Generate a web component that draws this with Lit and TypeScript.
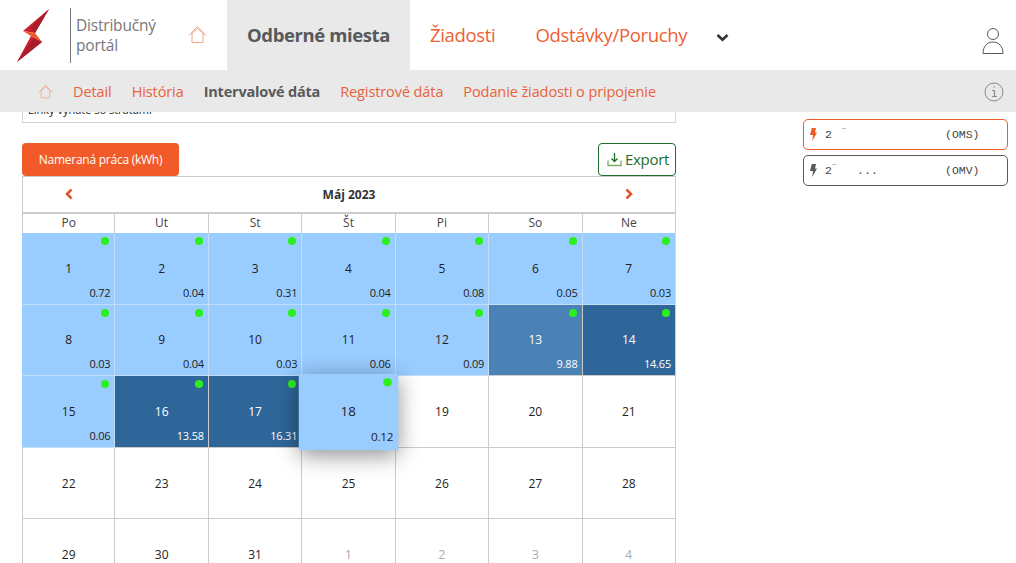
import { LitElement, html, css, svg } from 'lit';
import { customElement } from 'lit/decorators.js';
import { classMap } from 'lit/directives/class-map.js';

type Day = { n: number; v?: string; tone?: string; hover?: boolean; muted?: boolean };

const days: Day[] = [
  { n: 1, v: '0.72', tone: 'low' }, { n: 2, v: '0.04', tone: 'low' }, { n: 3, v: '0.31', tone: 'low' },
  { n: 4, v: '0.04', tone: 'low' }, { n: 5, v: '0.08', tone: 'low' }, { n: 6, v: '0.05', tone: 'low' },
  { n: 7, v: '0.03', tone: 'low' }, { n: 8, v: '0.03', tone: 'low' }, { n: 9, v: '0.04', tone: 'low' },
  { n: 10, v: '0.03', tone: 'low' }, { n: 11, v: '0.06', tone: 'low' }, { n: 12, v: '0.09', tone: 'low' },
  { n: 13, v: '9.88', tone: 'mid' }, { n: 14, v: '14.65', tone: 'high' }, { n: 15, v: '0.06', tone: 'low' },
  { n: 16, v: '13.58', tone: 'high' }, { n: 17, v: '16.31', tone: 'high' },
  { n: 18, v: '0.12', tone: 'low', hover: true },
  { n: 19 }, { n: 20 }, { n: 21 }, { n: 22 }, { n: 23 }, { n: 24 }, { n: 25 }, { n: 26 }, { n: 27 }, { n: 28 },
  { n: 29 }, { n: 30 }, { n: 31 },
  { n: 1, muted: true }, { n: 2, muted: true }, { n: 3, muted: true }, { n: 4, muted: true },
];

const homeIcon = svg`<path d="M1 10.500 9.500 1.500 18 10.500M3 9 9.500 3.500 16 9M4 8.500v9h11v-9" fill="none" stroke="currentColor" stroke-width="1"/>`;
const boltPath = svg`<path d="M1.800 0H6L5 4.500H7L2.300 13 3 7H0z" fill="currentColor"/>`;

@customElement('app-root')
export class AppRoot extends LitElement {
  static styles = css`
    :host {
      display: block;
      height: 563px;
      overflow: hidden;
      background: #fff;
      font-family: 'Open Sans', sans-serif;
      color: #222;
    }

    .top {
      display: flex;
      height: 70px;
    }

    .logo {
      display: block;
      margin: 8px 0 0 16px;
      width: 36px;
      height: 56px;
    }

    .brand {
      margin: 8px 0 0 18px;
      height: 55px;
      width: 96px;
      box-sizing: border-box;
      border-left: 1px solid #77787b;
      padding: 7px 0 0 5px;
      font-size: 15.5px;
      line-height: 20px;
      letter-spacing: -0.2px;
      color: #77787b;
    }

    .home {
      color: #f2a488;
      display: block;
      margin: 25px 20px 0 22px;
      width: 19px;
      height: 19px;
    }

    .tab {
      font-size: 18.5px;
      line-height: 69px;
      color: #ee5f33;
      letter-spacing: -0.33px;
      white-space: nowrap;
    }

    .tab.active {
      width: 183px;
      box-sizing: border-box;
      padding-left: 20px;
      margin-right: 20px;
      background: #e9e9e9;
      color: #58595b;
      font-weight: 700;
      letter-spacing: -0.4px;
    }

    .tab.second {
      margin-left: 40px;
    }

    .chevron {
      display: block;
      margin: 33px 0 0 29px;
      width: 13px;
      height: 9px;
    }

    .user {
      display: block;
      margin: 27px 12px 0 auto;
      width: 22px;
      height: 28px;
      color: #58595b;
    }

    .sub {
      display: flex;
      align-items: center;
      height: 42px;
      padding-left: 38px;
      background: #e9e9e9;
      font-size: 14.5px;
      letter-spacing: -0.1px;
      color: #e8623a;
    }

    .sub .home {
      margin: 1px 20px 0 0;
      width: 15px;
      height: 15px;
      color: #eea58c;
    }

    .sub a {
      margin-right: 20px;
      white-space: nowrap;
    }

    .sub a.current {
      font-weight: 700;
      color: #58595b;
      letter-spacing: -0.2px;
    }

    .info {
      display: block;
      margin: 2px 12px 0 auto;
      width: 20px;
      height: 20px;
      color: #8a8a8a;
    }

    .body {
      display: flex;
    }

    .main {
      width: 654px;
      margin-left: 22px;
    }

    .clipped {
      height: 11px;
      box-sizing: border-box;
      overflow: hidden;
      border: 1px solid #d4d4d4;
      border-top: 0;
      padding-left: 5px;
      font-size: 11px;
      line-height: 14px;
    }

    .clipped span {
      display: block;
      margin-top: -9px;
    }

    .actions {
      display: flex;
      justify-content: space-between;
      margin-top: 20px;
      height: 33px;
    }

    .measure {
      width: 157px;
      height: 33px;
      background: #f15a29;
      color: #fff;
      border-radius: 4px;
      font-size: 12px;
      line-height: 33px;
      text-align: center;
      letter-spacing: -0.25px;
    }

    .export {
      display: flex;
      align-items: center;
      gap: 3px;
      width: 78px;
      height: 33px;
      box-sizing: border-box;
      padding: 0 0 1px 8px;
      border: 1px solid #1c6e2a;
      border-radius: 4px;
      color: #1c6e2a;
      font-size: 15px;
      letter-spacing: -0.3px;
    }

    .export svg {
      display: block;
      width: 15px;
      height: 15px;
    }

    .cal {
      border-top: 1px solid #ccc;
    }

    .month {
      display: flex;
      align-items: center;
      justify-content: space-between;
      height: 35px;
      padding: 0 42px;
      border: 1px solid #ccc;
      border-width: 0 1px 2px;
      font-size: 12px;
      font-weight: 700;
      color: #333;
    }

    .month svg {
      display: block;
      width: 8px;
      height: 12px;
      margin-top: -2px;
    }

    .grid {
      display: grid;
      grid-template-columns: repeat(7, 1fr);
    }

    .head {
      height: 19px;
      line-height: 18px;
      text-align: center;
      font-size: 12px;
      color: #444;
      border-right: 1px solid #ccc;
    }

    .day {
      position: relative;
      height: 71.6px;
      box-sizing: border-box;
      display: flex;
      align-items: center;
      justify-content: center;
      border-right: 1px solid #ccc;
      border-bottom: 1px solid #ccc;
      font-size: 12px;
      color: #222;
    }

    .head:nth-child(7n + 1),
    .day:nth-child(7n + 1) {
      border-left: 1px solid #ccc;
    }

    .day.low {
      background: #99ccff;
      border-right-color: #c3ddf5;
      border-bottom-color: #c3ddf5;
    }

    .day.mid {
      background: #4a82b5;
      color: #fff;
    }

    .day.high {
      background: #2f6699;
      color: #fff;
    }

    .day.low:nth-child(7n + 1) {
      border-left-color: transparent;
    }

    .day.muted {
      color: #aaa;
    }

    .day.hover {
      z-index: 2;
      border-color: transparent;
      font-size: 12.5px;
      transform: scale(1.07, 1.06);
      box-shadow: 0 5px 20px rgba(0, 0, 0, 0.45);
    }

    .dot {
      position: absolute;
      top: 4px;
      right: 5px;
      width: 8px;
      height: 8px;
      border-radius: 50%;
      background: #2bf01e;
    }

    .val {
      position: absolute;
      right: 4px;
      bottom: 4px;
      font-size: 11px;
      line-height: 14px;
      letter-spacing: -0.2px;
    }

    .hover .val {
      bottom: 5px;
    }

    .side {
      display: flex;
      flex-direction: column;
      gap: 5px;
      width: 205px;
      margin: 7px 0 0 127px;
    }

    .meter {
      display: flex;
      align-items: center;
      height: 31px;
      box-sizing: border-box;
      padding-left: 6px;
      border: 1px solid #58595b;
      border-radius: 5px;
      font-family: 'Liberation Mono', monospace;
      font-size: 11.5px;
      color: #444;
    }

    .meter.on {
      border-color: #f15a29;
    }

    .meter svg {
      display: block;
      width: 7px;
      height: 13px;
      margin-right: 8px;
      color: #58595b;
    }

    .meter.on svg {
      color: #f15a29;
    }

    .meter .id {
      width: 120px;
      white-space: nowrap;
    }

    .tick {
      display: inline-block;
      font-size: 7px;
      vertical-align: 4px;
    }

    .tick.far {
      margin-left: 10px;
    }

    .dots {
      margin-left: 21px;
    }
  `;

  render() {
    return html`
      <div class="top">
        <svg class="logo" viewBox="0 0 36 56">
          <polygon points="33,1 7,23 19,25" fill="#c8202f" />
          <polygon points="33,1 14,20 19,25" fill="#a81d2a" />
          <polygon points="7,23 19,25 26,34 15,28" fill="#f15a29" />
          <polygon points="26,34 15,28 1,54" fill="#c8202f" />
          <polygon points="26,34 18,30 1,54" fill="#a81d2a" />
        </svg>
        <div class="brand">Distribučný<br />portál</div>
        <svg class="home" viewBox="0 0 19 19">${homeIcon}</svg>
        <div class="tab active">Odberné miesta</div>
        <div class="tab">Žiadosti</div>
        <div class="tab second">Odstávky/Poruchy</div>
        <svg class="chevron" viewBox="0 0 13 9">
          <path d="M1.500 2 6.500 6.800 11.500 2" fill="none" stroke="#333" stroke-width="2.600" />
        </svg>
        <svg class="user" viewBox="0 0 22 28" fill="none" stroke="currentColor" stroke-width="1">
          <circle cx="11" cy="7" r="5.500" />
          <path d="M1 26.500h20c0-7-4-11.500-10-11.500S1 19.500 1 26.500z" />
        </svg>
      </div>
      <div class="sub">
        <svg class="home" viewBox="0 0 19 19">${homeIcon}</svg>
        <a>Detail</a>
        <a>História</a>
        <a class="current">Intervalové dáta</a>
        <a>Registrové dáta</a>
        <a>Podanie žiadosti o pripojenie</a>
        <svg class="info" viewBox="0 0 20 20" fill="none" stroke="currentColor">
          <circle cx="10" cy="10" r="9" />
          <path d="M8 8.500h2.500v6M8 14.500h5M9.500 5h1.500" stroke-width="1.200" />
        </svg>
      </div>
      <div class="body">
        <div class="main">
          <div class="clipped"><span>Linky vyňaté so stratami</span></div>
          <div class="actions">
            <div class="measure">Nameraná práca (kWh)</div>
            <div class="export">
              <svg viewBox="0 0 15 15" fill="none" stroke="currentColor" stroke-width="1.300">
                <path d="M7.500 1v8M4.500 6.500l3 3 3-3" />
                <path d="M1 8.500v5h13v-5" stroke="#7fa86a" />
              </svg>
              Export
            </div>
          </div>
          <div class="cal">
            <div class="month">
              <svg viewBox="0 0 8 12"><path d="M6.500 1.500 2 6l4.500 4.500" fill="none" stroke="#e2552c" stroke-width="2.500" /></svg>
              Máj 2023
              <svg viewBox="0 0 8 12"><path d="M1.500 1.500 6 6l-4.500 4.500" fill="none" stroke="#e2552c" stroke-width="2.500" /></svg>
            </div>
            <div class="grid">
              ${['Po', 'Ut', 'St', 'Št', 'Pi', 'So', 'Ne'].map((d) => html`<div class="head">${d}</div>`)}
              ${days.map(
                (d) => html`
                  <div class=${classMap({ day: true, [d.tone ?? 'none']: true, hover: !!d.hover, muted: !!d.muted })}>
                    ${d.v ? html`<i class="dot"></i>` : ''}
                    ${d.n}
                    ${d.v ? html`<span class="val">${d.v}</span>` : ''}
                  </div>
                `,
              )}
            </div>
          </div>
        </div>
        <div class="side">
          <div class="meter on">
            <svg viewBox="0 0 7 13">${boltPath}</svg>
            <span class="id">2<span class="tick far">¯</span></span>(OMS)
          </div>
          <div class="meter">
            <svg viewBox="0 0 7 13">${boltPath}</svg>
            <span class="id">2<span class="tick">¯</span><span class="dots">...</span></span>(OMV)
          </div>
        </div>
      </div>
    `;
  }
}
